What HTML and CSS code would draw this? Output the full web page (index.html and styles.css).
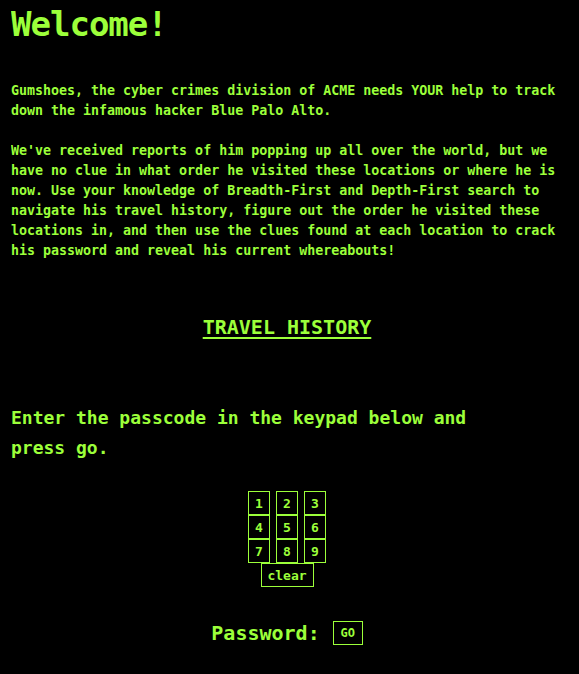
FILE: index.html
```html
<!DOCTYPE html>
<html>
<head>
<meta charset="utf-8">
<link rel="stylesheet" href="styles.css">
</head>
<body>
<h1 class="title">Welcome!</h1>
<p class="text">Gumshoes, the cyber crimes division of ACME needs YOUR help to track down the infamous hacker Blue Palo Alto.</p>
<p class="text">We've received reports of him popping up all over the world, but we have no clue in what order he visited these locations or where he is now. Use your knowledge of Breadth-First and Depth-First search to navigate his travel history, figure out the order he visited these locations in, and then use the clues found at each location to crack his password and reveal his current whereabouts!</p>
<div class="center history"><a class="link" href="#">TRAVEL HISTORY</a></div>
<h2 class="prompt">Enter the passcode in the keypad below and press go.</h2>
<div class="keypad">
  <div class="row"><button class="key">1</button><button class="key">2</button><button class="key">3</button></div>
  <div class="row"><button class="key">4</button><button class="key">5</button><button class="key">6</button></div>
  <div class="row"><button class="key">7</button><button class="key">8</button><button class="key">9</button></div>
  <div class="row"><button class="key clear">clear</button></div>
</div>
<div class="password"><span class="label">Password:</span><button class="go">GO</button></div>
</body>
</html>
```
FILE: styles.css
```css
html, body {
  background: #000;
}
body {
  margin: 8px 16px 8px 11px;
  color: #9cff3a;
  font-family: "DejaVu Sans Mono", "Liberation Mono", monospace;
  font-weight: bold;
}
.title {
  margin: 0;
  font-size: 34px;
  letter-spacing: -1px;
  line-height: 32px;
}
.text {
  margin: 41px 0 0 0;
  font-size: 13.3px;
  line-height: 20px;
}
.text + .text {
  margin-top: 20px;
}
.center {
  text-align: center;
}
.history {
  margin-top: 52px;
  line-height: 28px;
}
.link {
  color: #9cff3a;
  font-size: 20px;
  text-decoration: underline;
  text-decoration-thickness: 2px;
  text-underline-offset: 3px;
}
.prompt {
  margin: 60px 0 0 0;
  max-width: 480px;
  font-size: 18px;
  line-height: 30px;
}
.keypad {
  margin-top: 28px;
  display: flex;
  flex-direction: column;
  align-items: center;
}
.row {
  display: flex;
  gap: 6px;
}
.key {
  width: 22px;
  height: 24px;
  padding: 0;
  background: #000;
  color: #9cff3a;
  border: 1px solid #9cff3a;
  font-family: "DejaVu Sans Mono", monospace;
  font-weight: bold;
  font-size: 13px;
}
.clear {
  width: 53px;
}
.password {
  margin-top: 34px;
  display: flex;
  justify-content: center;
  align-items: center;
  gap: 13px;
}
.label {
  font-size: 20px;
}
.go {
  width: 30px;
  height: 24px;
  padding: 0;
  background: #000;
  color: #9cff3a;
  border: 1px solid #9cff3a;
  font-family: "DejaVu Sans Mono", monospace;
  font-weight: bold;
  font-size: 12px;
}
```
